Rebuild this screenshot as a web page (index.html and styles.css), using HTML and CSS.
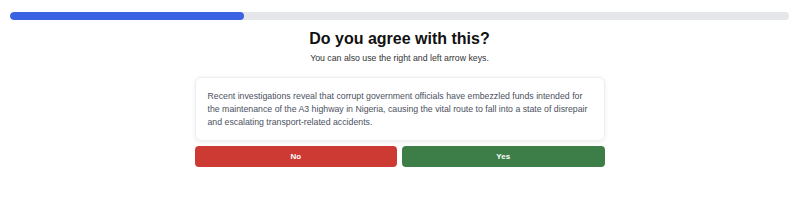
FILE: index.html
```html
<!DOCTYPE html>
<html lang="en">

<head>
    <meta charset="UTF-8">
    <meta name="viewport" content="width=device-width, initial-scale=1.0">
    <title>Survey</title>
    <link rel="stylesheet" href="styles.css">
</head>

<body>
    <div class="page">
        <div class="progress">
            <div class="progress-fill" style="width: 30%"></div>
        </div>
        <div class="question">
            <h1 class="title">Do you agree with this?</h1>
            <p class="hint">You can also use the right and left arrow keys.</p>
            <div class="card">
                Recent investigations reveal that corrupt government officials have embezzled funds intended for
                the maintenance of the A3 highway in Nigeria, causing the vital route to fall into a state of disrepair
                and escalating transport-related accidents.
            </div>
            <div class="actions">
                <button class="btn no">No</button>
                <button class="btn yes">Yes</button>
            </div>
        </div>
    </div>
</body>

</html>
```

FILE: styles.css
```css
body {
    margin: 0;
    background-color: #fff;
    font-family: "Liberation Sans", Arial, sans-serif;
}

.page {
    padding: 12px 17px 0 10px;
}

.progress {
    height: 8px;
    background-color: #e5e6ea;
    border-radius: 4px;
    overflow: hidden;
}

.progress-fill {
    height: 100%;
    background-color: #3a62e2;
    border-radius: 4px;
}

.question {
    width: 410px;
    margin: 0 auto;
    display: flex;
    flex-direction: column;
    align-items: stretch;
}

.title {
    margin: 11px 0 0;
    font-size: 16px;
    line-height: 16px;
    font-weight: 700;
    color: #111;
    text-align: center;
}

.hint {
    margin: 5px 0 0;
    font-size: 8.75px;
    line-height: 12px;
    color: #333;
    text-align: center;
}

.card {
    margin-top: 13px;
    padding: 12px 12px 11px;
    border: 1px solid #eceef1;
    border-radius: 6px;
    box-shadow: 0 1px 4px rgba(0, 0, 0, 0.08);
    font-size: 8.75px;
    line-height: 13px;
    color: #4b5160;
}

.actions {
    margin-top: 5px;
    display: flex;
    gap: 5px;
}

.btn {
    flex: 1;
    height: 21px;
    border: none;
    border-radius: 4px;
    color: #fff;
    font-family: "Liberation Sans", Arial, sans-serif;
    font-size: 8px;
    font-weight: 700;
    cursor: pointer;
}

.no {
    background-color: #cd3a33;
}

.yes {
    background-color: #3d7d47;
}
```
